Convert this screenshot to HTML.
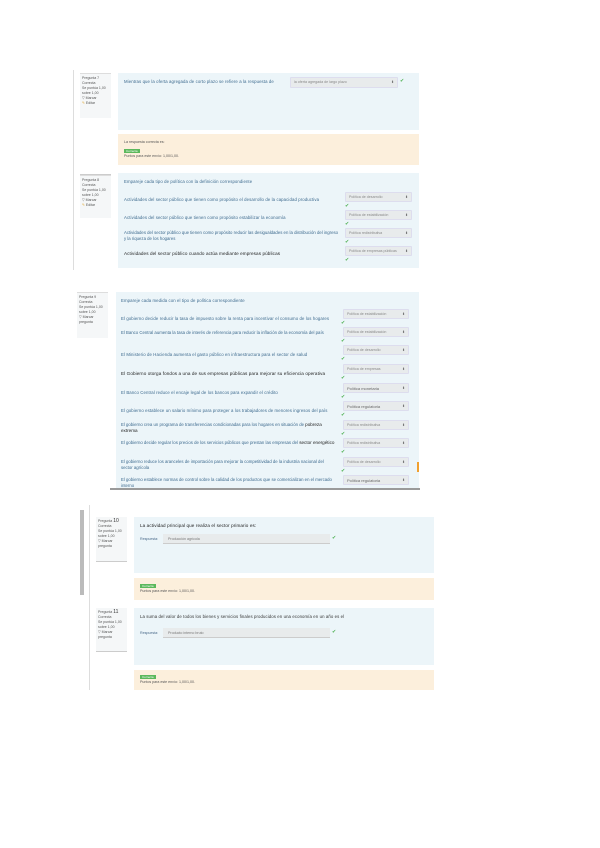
<!DOCTYPE html>
<html><head><meta charset="utf-8"><style>
*{margin:0;padding:0;box-sizing:border-box}
body{width:600px;height:848px;background:#fff;position:relative;overflow:hidden;font-family:"Liberation Sans",sans-serif;color:#4a6a8a}
div{position:absolute}
.info{background:#f5f7f8;border-top:1px solid #ddd;font-size:3.5px;line-height:5px;color:#555;padding:2px}
.info b{color:#333;font-weight:normal}
.blue{background:#ecf5f9}
.ora{background:#fcefdc}
.t{font-size:4.3px;white-space:nowrap;color:#3d6a8e;letter-spacing:.1px}
.t2{font-size:4.3px;line-height:6px;color:#3d6a8e;width:215px}
.dk{color:#222;font-size:4.6px}
.sel{background:#e8ebec;border:1px solid #dde;border-radius:1px;font-size:3.6px;color:#888;padding:2px 3px;white-space:nowrap;overflow:hidden}
.sel:after{content:"⬍";position:absolute;right:3px;top:2px;font-size:3.5px;color:#666}
.ck{color:#4caf50;font-size:5px}
.inp{background:#e8ebec;border-bottom:1px solid #ccc;font-size:3.6px;color:#777;padding:3px 5px}
.tag{background:#5cb85c;color:#fff;font-size:3px;padding:0 2px;line-height:4px}
.sm{font-size:3.6px;color:#555;white-space:nowrap}
</style></head><body>

<!-- Section 1 -->
<div style="left:73px;top:70px;width:1px;height:200px;background:#ddd"></div>
<div class="info" style="left:80px;top:73px;width:31px;height:45px">Pregunta 7<br>Correcta<br>Se puntúa 1,00<br>sobre 1,00<br>▽ Marcar<br><span style="color:#e0a020">✎</span> Editar</div>
<div class="blue" style="left:118px;top:73px;width:301px;height:57px"></div>
<div class="t" style="left:124px;top:79px;width:164px;overflow:hidden">Mientras que la oferta agregada de corto plazo se refiere a la respuesta de</div>
<div class="sel" style="left:290px;top:77px;width:108px;height:11px">la oferta agregada de largo plazo</div>
<div class="ck" style="left:400px;top:78px">✔</div>
<div class="ora" style="left:118px;top:134px;width:301px;height:31px"></div>
<div class="sm" style="left:124px;top:140px">La respuesta correcta es:</div>
<div class="tag" style="left:124px;top:149px">Correcta</div>
<div class="sm" style="left:124px;top:154px">Puntos para este envío: 1,00/1,00.</div>

<div style="left:80px;top:174px;width:31px;height:1px;background:#ccc"></div>
<div class="info" style="left:80px;top:175px;width:31px;height:43px">Pregunta 8<br>Correcta<br>Se puntúa 1,00<br>sobre 1,00<br>▽ Marcar<br><span style="color:#e0a020">✎</span> Editar</div>
<div class="blue" style="left:118px;top:173px;width:301px;height:95px"></div>
<div class="t" style="left:124px;top:179px">Empareje cada tipo de política con la definición correspondiente</div>
<div class="t" style="left:124px;top:197px">Actividades del sector público que tienen como propósito el desarrollo de la capacidad productiva</div>
<div class="t" style="left:124px;top:215px">Actividades del sector público que tienen como propósito estabilizar la economía</div>
<div class="t2" style="left:124px;top:230px">Actividades del sector público que tienen como propósito reducir las desigualdades en la distribución del ingreso y la riqueza de los hogares</div>
<div class="t dk" style="left:124px;top:251px">Actividades del sector público cuando actúa mediante empresas públicas</div>
<div class="sel" style="left:345px;top:192px;width:67px;height:10px">Política de desarrollo</div>
<div class="ck" style="left:345px;top:203px">✔</div>
<div class="sel" style="left:345px;top:210px;width:67px;height:10px">Política de estabilización</div>
<div class="ck" style="left:345px;top:221px">✔</div>
<div class="sel" style="left:345px;top:228px;width:67px;height:10px">Política redistributiva</div>
<div class="ck" style="left:345px;top:239px">✔</div>
<div class="sel" style="left:345px;top:246px;width:67px;height:10px">Política de empresas públicas</div>
<div class="ck" style="left:345px;top:257px">✔</div>

<!-- Section 2 -->
<div class="info" style="left:77px;top:292px;width:31px;height:46px">Pregunta 9<br>Correcta<br>Se puntúa 1,00<br>sobre 1,00<br>▽ Marcar<br>pregunta</div>
<div class="blue" style="left:116px;top:292px;width:303px;height:196px"></div>
<div style="left:110px;top:488px;width:310px;height:2px;background:#9a9a9a"></div>
<div style="left:417px;top:462px;width:2px;height:10px;background:#f0a030"></div>
<div class="t" style="left:121px;top:298px">Empareje cada medida con el tipo de política correspondiente</div>
<div class="t" style="left:121px;top:316px">El gobierno decide reducir la tasa de impuesto sobre la renta para incentivar el consumo de los hogares</div>
<div class="t2" style="left:121px;top:330px">El Banco Central aumenta la tasa de interés de referencia para reducir la inflación de la economía del país</div>
<div class="t" style="left:121px;top:352px">El Ministerio de Hacienda aumenta el gasto público en infraestructura para el sector de salud</div>
<div class="t dk" style="left:121px;top:371px">El Gobierno otorga fondos a una de sus empresas públicas para mejorar su eficiencia operativa</div>
<div class="t" style="left:121px;top:390px">El Banco Central reduce el encaje legal de los bancos para expandir el crédito</div>
<div class="t" style="left:121px;top:408px">El gobierno establece un salario mínimo para proteger a los trabajadores de menores ingresos del país</div>
<div class="t2" style="left:121px;top:422px">El gobierno crea un programa de transferencias condicionadas para los hogares en situación de <span class="dk">pobreza extrema</span></div>
<div class="t2" style="left:121px;top:440px">El gobierno decide regular los precios de los servicios públicos que prestan las empresas del <span class="dk">sector energético</span></div>
<div class="t2" style="left:121px;top:459px">El gobierno reduce los aranceles de importación para mejorar la competitividad de la industria nacional del sector agrícola</div>
<div class="t2" style="left:121px;top:477px">El gobierno establece normas de control sobre la calidad de los productos que se comercializan en el mercado interno</div>
<div class="sel" style="left:343px;top:309px;width:66px;height:10px">Política de estabilización</div>
<div class="ck" style="left:341px;top:320px">✔</div>
<div class="sel" style="left:343px;top:327px;width:66px;height:10px">Política de estabilización</div>
<div class="ck" style="left:341px;top:338px">✔</div>
<div class="sel" style="left:343px;top:345px;width:66px;height:10px">Política de desarrollo</div>
<div class="ck" style="left:341px;top:356px">✔</div>
<div class="sel" style="left:343px;top:364px;width:66px;height:10px">Política de empresas</div>
<div class="ck" style="left:341px;top:375px">✔</div>
<div class="sel" style="left:343px;top:383px;width:66px;height:10px;color:#666;font-size:4px">Política monetaria</div>
<div class="ck" style="left:341px;top:394px">✔</div>
<div class="sel" style="left:343px;top:401px;width:66px;height:10px;color:#666;font-size:4px">Política regulatoria</div>
<div class="ck" style="left:341px;top:412px">✔</div>
<div class="sel" style="left:343px;top:420px;width:66px;height:10px">Política redistributiva</div>
<div class="ck" style="left:341px;top:431px">✔</div>
<div class="sel" style="left:343px;top:438px;width:66px;height:10px">Política redistributiva</div>
<div class="ck" style="left:341px;top:449px">✔</div>
<div class="sel" style="left:343px;top:457px;width:66px;height:10px">Política de desarrollo</div>
<div class="ck" style="left:341px;top:468px">✔</div>
<div class="sel" style="left:343px;top:475px;width:66px;height:10px;color:#666;font-size:4px">Política regulatoria</div>

<!-- Section 3 -->
<div style="left:80px;top:510px;width:4px;height:85px;background:#bbb"></div>
<div style="left:89px;top:505px;width:1px;height:185px;background:#ddd"></div>
<div class="info" style="left:96px;top:517px;width:31px;height:45px;border-top:none;border-bottom:1px solid #ccc">Pregunta <b style="font-size:5px">10</b><br>Correcta<br>Se puntúa 1,00<br>sobre 1,00<br>▽ Marcar<br>pregunta</div>
<div class="blue" style="left:134px;top:517px;width:300px;height:56px"></div>
<div class="t dk" style="left:140px;top:523px">La actividad principal que realiza el sector primario es:</div>
<div class="sm" style="left:140px;top:537px;color:#4a6a8a">Respuesta:</div>
<div class="inp" style="left:163px;top:534px;width:167px;height:10px">Producción agrícola</div>
<div class="ck" style="left:332px;top:535px">✔</div>
<div class="ora" style="left:134px;top:578px;width:300px;height:22px"></div>
<div class="tag" style="left:140px;top:584px">Correcta</div>
<div class="sm" style="left:140px;top:589px">Puntos para este envío: 1,00/1,00.</div>

<div class="info" style="left:96px;top:608px;width:31px;height:44px;border-top:none;border-bottom:1px solid #ccc">Pregunta <b style="font-size:5px">11</b><br>Correcta<br>Se puntúa 1,00<br>sobre 1,00<br>▽ Marcar<br>pregunta</div>
<div class="blue" style="left:134px;top:608px;width:300px;height:57px"></div>
<div class="t" style="left:140px;top:614px;color:#333">La suma del valor de todos los bienes y servicios finales producidos en una economía en un año es el</div>
<div class="sm" style="left:140px;top:631px;color:#4a6a8a">Respuesta:</div>
<div class="inp" style="left:163px;top:628px;width:167px;height:10px">Producto interno bruto</div>
<div class="ck" style="left:332px;top:629px">✔</div>
<div class="ora" style="left:134px;top:670px;width:300px;height:20px"></div>
<div class="tag" style="left:140px;top:675px">Correcta</div>
<div class="sm" style="left:140px;top:680px">Puntos para este envío: 1,00/1,00.</div>
</body></html>
